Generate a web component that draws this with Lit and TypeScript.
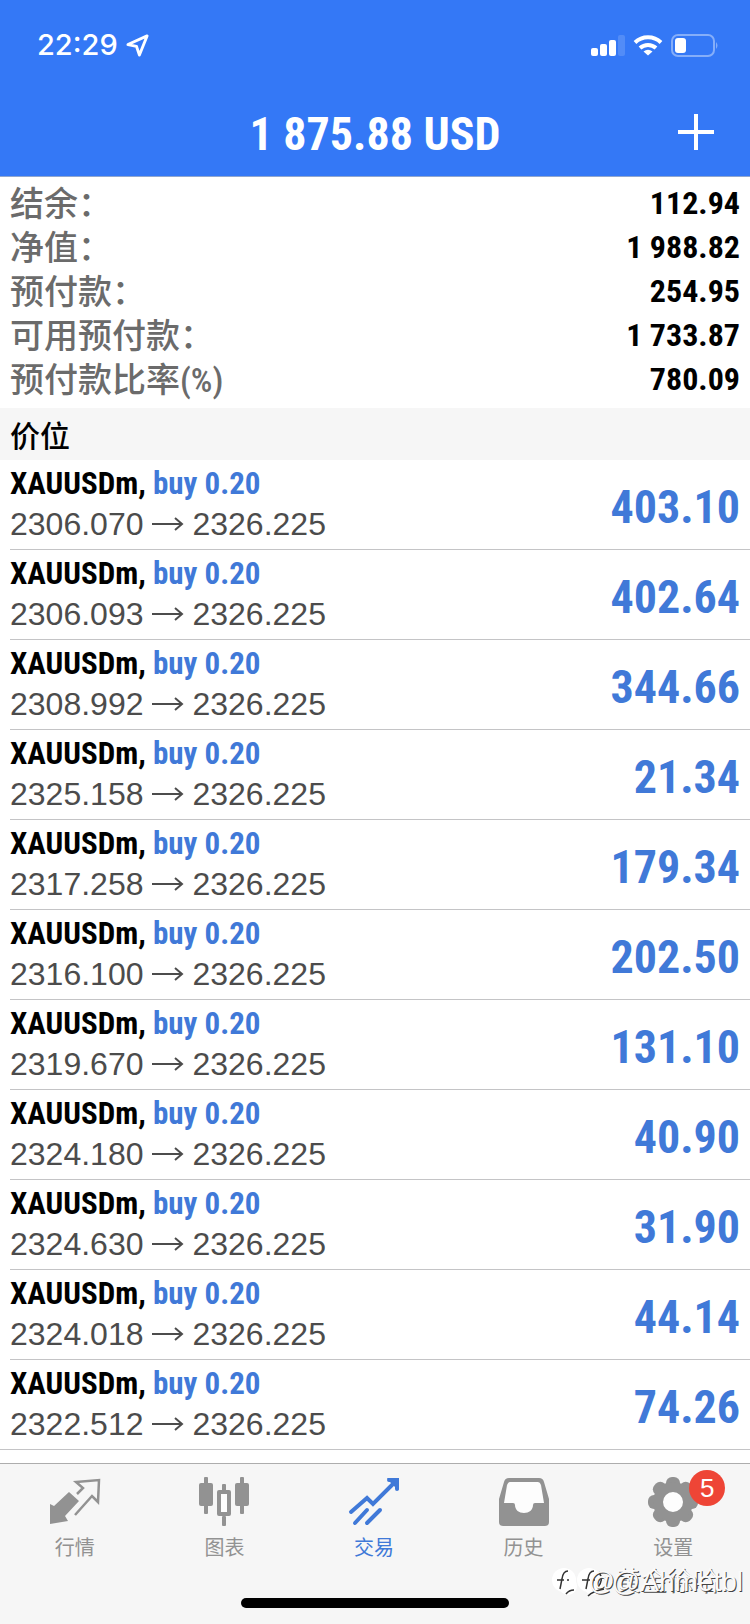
import { LitElement, html, css, svg } from "lit";
import { customElement } from "lit/decorators.js";

const summary = [
  ["结余：", "112.94"],
  ["净值：", "1 988.82"],
  ["预付款：", "254.95"],
  ["可用预付款：", "1 733.87"],
  ["预付款比率(%)", "780.09"],
];

const positions = [
  ["2306.070", "403.10"],
  ["2306.093", "402.64"],
  ["2308.992", "344.66"],
  ["2325.158", "21.34"],
  ["2317.258", "179.34"],
  ["2316.100", "202.50"],
  ["2319.670", "131.10"],
  ["2324.180", "40.90"],
  ["2324.630", "31.90"],
  ["2324.018", "44.14"],
  ["2322.512", "74.26"],
];

const gearTeeth = [0, 45, 90, 135, 180, 225, 270, 315];

const icons = {
  quotes: svg`
    <path d="M0 26 4 28 19 14 29 23 15 38 18 43 0 46z" fill="currentColor" />
    <path d="M27 16 33 10 26 4 49 2 48 24 42 18 25 37" fill="none" stroke="currentColor" stroke-width="2.500" />`,
  chart: svg`
    <g fill="currentColor">
      <rect x="5" y="-1" width="4" height="37" rx="1" /><rect x="0" y="5" width="14" height="23" rx="2" />
      <rect x="41" y="-1" width="4" height="37" rx="1" /><rect x="36" y="5" width="14" height="23" rx="2" />
      <rect x="23" y="6" width="4" height="8" rx="1" /><rect x="23" y="38" width="4" height="10" rx="1" />
    </g>
    <rect x="20" y="14" width="10" height="22" fill="#fdfdfd" stroke="currentColor" stroke-width="4" stroke-linejoin="round" />`,
  trade: svg`
    <g fill="none" stroke="currentColor" stroke-width="4" stroke-linecap="round">
      <path d="M2 34 18 20 24 26 47 3M40 2h8v9M6 45 18 32M18 45 31 32" />
    </g>
    <path d="M38 0h12v12l-4-3-5-5z" fill="currentColor" />`,
  history: svg`
    <path d="M10 2h30l6 24H4z" fill="#fdfdfd" />
    <path d="M15 25h20v12H15z" fill="#fdfdfd" />
    <path fill-rule="evenodd" fill="currentColor" d="M10 0h30q4 0 5 4l5 17v23q0 4-4 4H4q-4 0-4-4V21L5 4q1-4 5-4zM11 4q-2 0-3 3L5 25h9q2 0 2 2c0 5 4 8 9 8s9-3 9-8q0-2 2-2h9L42 7q-1-3-3-3z" />`,
  settings: svg`
    <g fill="currentColor">
      ${gearTeeth.map((a) => svg`<rect x="18" y="-1" width="14" height="14" rx="6" transform="rotate(${a} 25 24)" />`)}
    </g>
    <circle cx="25" cy="24" r="15" fill="#fdfdfd" stroke="currentColor" stroke-width="10" />`,
};

const tabs = [
  { label: "行情", icon: icons.quotes },
  { label: "图表", icon: icons.chart },
  { label: "交易", icon: icons.trade, active: true },
  { label: "历史", icon: icons.history },
  { label: "设置", icon: icons.settings, badge: 5 },
];

@customElement("app-root")
export class AppRoot extends LitElement {
  static styles = css`
    :host {
      display: flex;
      flex-direction: column;
      min-height: 100vh;
      background: #fff;
      color: #000;
      font-family: "Liberation Sans", "Noto Sans CJK SC", sans-serif;
    }
    * { box-sizing: border-box; }
    .top { background: #3478f6; color: #fff; border-bottom: 1px solid #8fa6cf; }
    .status {
      display: flex;
      align-items: center;
      justify-content: space-between;
      padding: 24px 31px 0 37px;
      height: 66px;
    }
    .clock { display: flex; align-items: center; gap: 8px; font: 500 29px/42px Inter, sans-serif; }
    .signals { display: flex; align-items: center; gap: 8px; }
    svg { display: block; overflow: visible; }
    .nav {
      display: grid;
      grid-template-columns: 1fr auto 1fr;
      align-items: center;
      padding: 22px 36px 0;
      height: 110px;
    }
    .title, .amount, .deal, .profit {
      font-family: "Liberation Sans Narrow", "Roboto Condensed", "Liberation Sans", sans-serif;
      font-weight: 700;
    }
    .title { grid-column: 2; margin: 0; padding-top: 4px; font-size: 46px; line-height: 56px; }
    .add { justify-self: end; padding: 0; border: 0; background: none; color: inherit; }
    .summary { margin: 0; padding: 4px 10px 7px; }
    .line { display: flex; justify-content: space-between; height: 44px; line-height: 44px; }
    .term {
      font-family: "Liberation Sans Narrow", "Roboto Condensed", "Noto Sans CJK SC", sans-serif;
      font-size: 34px;
      font-weight: 500;
      line-height: 46px;
      color: #6b6b6b;
    }
    .amount { margin: 0; font-size: 32px; }
    .section {
      margin: 0;
      padding: 0 10px;
      background: #f6f6f6;
      font: 500 30px/52px "Noto Sans CJK SC", sans-serif;
    }
    .list { flex: 1; margin: 0; padding: 0; list-style: none; }
    .row {
      display: flex;
      justify-content: space-between;
      align-items: center;
      height: 90px;
      margin-left: 10px;
      padding-right: 10px;
      border-bottom: 1px solid #c4c4c6;
    }
    .row:last-child { margin-left: 0; padding-left: 10px; }
    .trade { padding-bottom: 2px; }
    .deal { font-size: 31px; line-height: 40px; }
    .side { color: #4079d8; }
    .prices { display: flex; align-items: center; gap: 9px; font-size: 32px; line-height: 40px; color: #4c4c4c; }
    .profit { padding-top: 4px; font-size: 46px; line-height: 56px; color: #4079d8; }
    .bottom { position: relative; background: #f6f6f6; border-top: 1px solid #adadad; }
    .tabs { display: grid; grid-template-columns: repeat(5, 1fr); padding: 14px 2px 0 0; }
    .tab {
      display: flex;
      flex-direction: column;
      align-items: center;
      gap: 6px;
      padding: 0;
      border: 0;
      background: none;
      color: #929292;
      font: 400 20px/30px "Noto Sans CJK SC", sans-serif;
    }
    .active { color: #4079d8; }
    .glyph { position: relative; }
    .badge {
      position: absolute;
      top: -8px;
      left: 41px;
      width: 36px;
      height: 36px;
      border-radius: 50%;
      background: #ee4536;
      color: #fff;
      font: 400 26px/36px "Liberation Sans", sans-serif;
    }
    .home { width: 268px; height: 10px; margin: 36px auto 16px; border-radius: 5px; background: #000; }
    .mark {
      position: absolute;
      right: 7px;
      bottom: 26px;
      width: 190px;
      height: 32px;
      color: #fafafa;
      text-shadow: 1px 1px 0 #444;
      white-space: nowrap;
    }
    .latin { position: absolute; right: 0; top: 0; font-size: 28px; line-height: 32px; }
    .han { position: absolute; right: 24px; top: 0; font-size: 26px; line-height: 30px; }
  `;

  render() {
    return html`
      <header class="top">
        <div class="status">
          <div class="clock">
            22:29
            <svg width="23" height="23" viewBox="0 0 24 24"><path d="M22 2 14 22 11 13 2 11z" fill="none" stroke="#fff" stroke-width="3" stroke-linejoin="round" /></svg>
          </div>
          <div class="signals">
            <svg width="34" height="22" viewBox="0 0 34 22" fill="#fff">
              <rect y="14" width="7" height="8" rx="2" /><rect x="9" y="10" width="7" height="12" rx="2" />
              <rect x="18" y="6" width="7" height="16" rx="2" /><rect x="27" y="1" width="7" height="21" rx="2" opacity=".15" />
            </svg>
            <svg width="30" height="22" viewBox="0 0 30 22" fill="none" stroke="#fff" stroke-width="4">
              <path d="M2 8.500a19 19 0 0 1 26 0M7 14a12 12 0 0 1 16 0" />
              <path d="M15 21.500 10.500 17.500q4.500-3.500 9 0z" fill="#fff" stroke="none" />
            </svg>
            <svg width="48" height="23" viewBox="0 0 48 23">
              <rect x="1" y="1" width="42" height="21" rx="6" fill="none" stroke="#fff" stroke-opacity=".4" stroke-width="2" />
              <rect x="4" y="4" width="11" height="15" rx="3" fill="#fff" />
              <path d="M45 8q3 3.500 0 7z" fill="#fff" opacity=".4" />
            </svg>
          </div>
        </div>
        <div class="nav">
          <h1 class="title">1 875.88 USD</h1>
          <button class="add" aria-label="+">
            <svg width="36" height="36" viewBox="0 0 36 36"><path d="M18 0v36M0 18h36" stroke="#fff" stroke-width="4" /></svg>
          </button>
        </div>
      </header>
      <dl class="summary">
        ${summary.map(([k, v]) => html`<div class="line"><dt class="term">${k}</dt><dd class="amount">${v}</dd></div>`)}
      </dl>
      <h2 class="section">价位</h2>
      <ul class="list">
        ${positions.map(([open, profit]) => html`
          <li class="row">
            <div class="trade">
              <div class="deal">XAUUSDm, <span class="side">buy 0.20</span></div>
              <div class="prices">
                <span>${open}</span>
                <svg width="31" height="14" viewBox="0 0 31 14"><path d="M0 7h30M23 1l7 6-7 6" fill="none" stroke="currentColor" stroke-width="2" /></svg>
                <span>2326.225</span>
              </div>
            </div>
            <div class="profit">${profit}</div>
          </li>`)}
      </ul>
      <footer class="bottom">
        <nav class="tabs">
          ${tabs.map((t) => html`
            <button class="tab ${t.active ? "active" : ""}">
              <span class="glyph">
                <svg width="50" height="48" viewBox="0 0 50 48">${t.icon}</svg>
                ${t.badge ? html`<span class="badge">${t.badge}</span>` : ""}
              </span>
              ${t.label}
            </button>`)}
        </nav>
        <div class="home"></div>
        <div class="mark">
          <svg width="52" height="32" viewBox="0 0 52 32">
            <g fill="#fff"><circle cx="11" cy="14" r="12" /><circle cx="15" cy="20" r="9" /><circle cx="36" cy="14" r="12" /><circle cx="40" cy="20" r="9" /></g>
            <g fill="none" stroke="#333" stroke-width="1.500">
              <path d="M15 5q-5 0-6 8L7 23M4 14h7M14 14h2M13 28q3-4 8-4" />
              <path d="M41 5q-5 0-6 8l-2 10M29 14h8M40 14h2M46 6q5 8-1 15M35 30q5-5 16-7" />
            </g>
          </svg>
          <span class="han">@黄金徐哈</span>
          <span class="latin">@Ahmetbl</span>
        </div>
      </footer>
    `;
  }
}
